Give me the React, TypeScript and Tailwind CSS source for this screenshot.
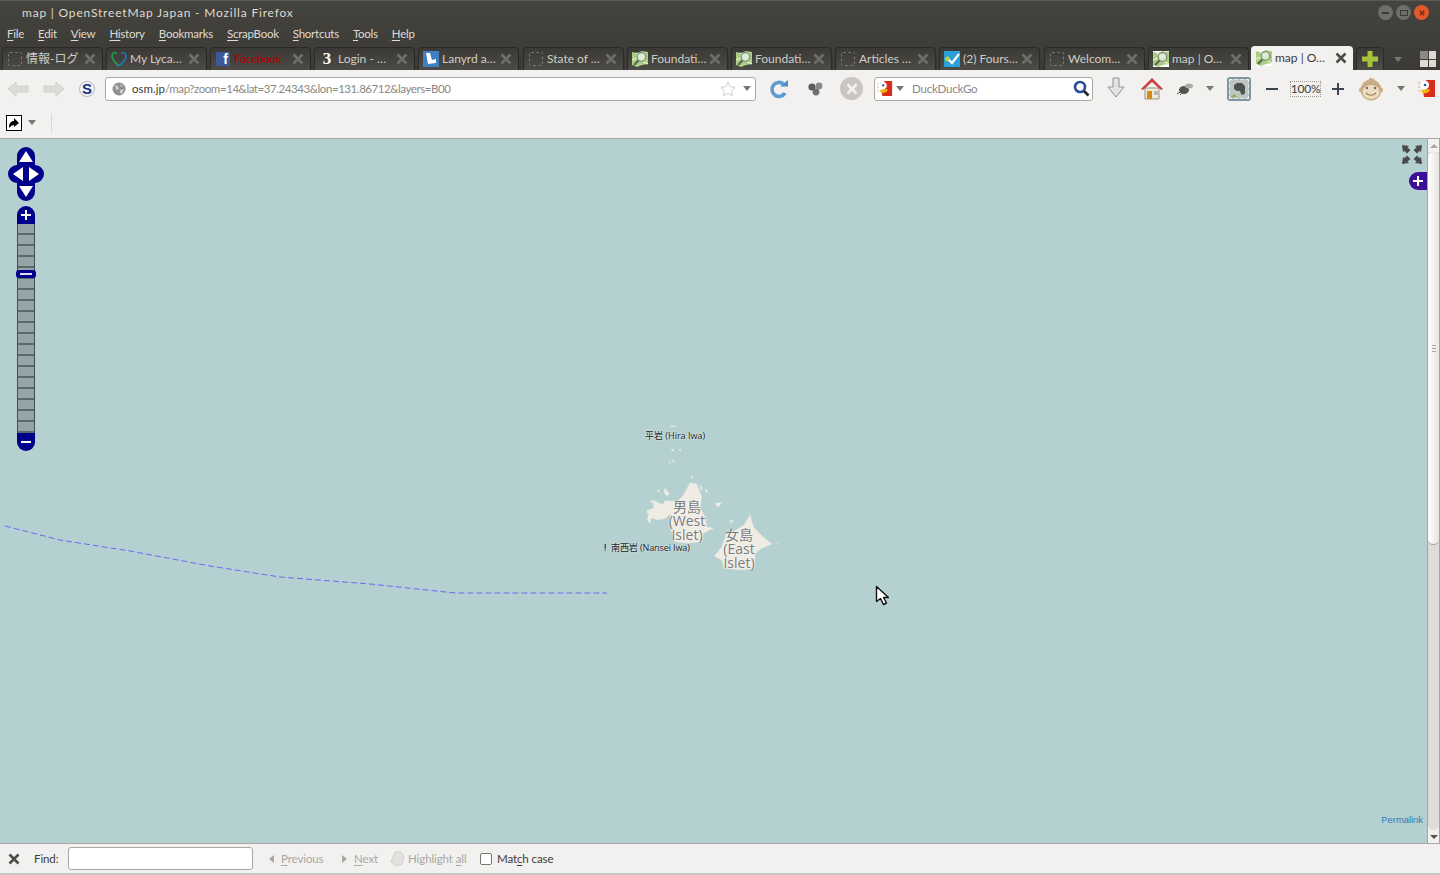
import React from "react"

const ui = "font-['Lato','Noto_Sans_CJK_JP',sans-serif]"
const mapFont = "font-['Open_Sans','Noto_Sans_CJK_JP',sans-serif]"

const Blank = () => (
  <div className="w-[14px] h-[14px] rounded-[2px] border border-dashed border-[#77766f]" />
)

const Lyca = () => (
  <svg width="16" height="16" viewBox="0 0 16 16" fill="none">
    <path d="M8 15C3 11 1 8 1 5c0-3 3-4 5-3" stroke="#1f9a55" strokeWidth="1.8" />
    <path d="M8 15c5-4 7-7 7-10 0-3-3-4-5-3" stroke="#1d76b8" strokeWidth="1.8" />
  </svg>
)

const Fb = () => (
  <div className="w-[14px] h-[14px] bg-[#3b5998] flex items-end justify-end overflow-hidden pr-[2px]">
    <span className="text-white text-[14px] leading-[13px] font-bold font-['Liberation_Sans',sans-serif]">f</span>
  </div>
)

const Three = () => (
  <span className="text-white text-[17px] leading-[16px] font-bold font-['Liberation_Serif',serif]">3</span>
)

const Lanyrd = () => (
  <div className="w-[16px] h-[16px] bg-[#3f7fc4] flex items-center justify-center">
    <svg width="12" height="13" viewBox="0 0 12 13"><path d="M1 1h4l2 7 4-1v4l-8 1z" fill="#fff" /></svg>
  </div>
)

const Osm = ({ boxed }: { boxed?: boolean }) => (
  <svg width="16" height="16" viewBox="0 0 16 16">
    {boxed && <rect width="16" height="16" fill="#fff" />}
    <path d="M0 1l5 1 5-2 6 1v12l-6 1-5 2-5-2z" fill="#a9cf85" />
    <path d="M4 2l6 5M12 1l-3 6M0 9l5-2M11 11l5 2" stroke="#e9eecb" strokeWidth="1.2" />
    <circle cx="9.5" cy="6" r="4.3" fill="#e8efe6" fillOpacity="0.75" stroke="#7f8c78" strokeWidth="1.2" />
    <path d="M6.5 9.5L2 14" stroke="#5a6353" strokeWidth="2" />
  </svg>
)

const Four = () => (
  <div className="w-[16px] h-[16px] bg-[#2c9fd8] flex items-center justify-center">
    <svg width="16" height="16" viewBox="0 0 16 16">
      <circle cx="3.5" cy="8" r="2.5" fill="#b5d33d" />
      <path d="M5 9l3 3 7-9" fill="none" stroke="#fff" strokeWidth="2.2" />
    </svg>
  </div>
)

const X = ({ className }: { className: string }) => (
  <svg className={className} width="12" height="12" viewBox="0 0 12 12">
    <path d="M1.5 1.5l9 9M10.5 1.5l-9 9" stroke="currentColor" strokeWidth="2.6" />
  </svg>
)

const tabs: { title: string; icon: React.ReactNode; red?: boolean }[] = [
  { title: "情報-ログ", icon: <Blank /> },
  { title: "My Lyca…", icon: <Lyca /> },
  { title: "Facebook", icon: <Fb />, red: true },
  { title: "Login - …", icon: <Three /> },
  { title: "Lanyrd a…", icon: <Lanyrd /> },
  { title: "State of …", icon: <Blank /> },
  { title: "Foundati…", icon: <Osm /> },
  { title: "Foundati…", icon: <Osm /> },
  { title: "Articles …", icon: <Blank /> },
  { title: "(2) Fours…", icon: <Four /> },
  { title: "Welcom…", icon: <Blank /> },
  { title: "map | O…", icon: <Osm boxed /> },
]

const menus = [
  ["F", "ile", "ml-[7px]"],
  ["E", "dit", "ml-[14px]"],
  ["V", "iew", "ml-[14px]"],
  ["Hi", "story", "ml-[14px]"],
  ["B", "ookmarks", "ml-[14px]"],
  ["Sc", "rapBook", "ml-[14px]"],
  ["S", "hortcuts", "ml-[14px]"],
  ["T", "ools", "ml-[14px]"],
  ["H", "elp", "ml-[14px]"],
] as const

const Caret = ({ className = "" }: { className?: string }) => (
  <div className={`w-0 h-0 border-x-[4px] border-x-transparent border-t-[5px] border-t-[#77766f] ${className}`} />
)

const WinBtn = ({ bg, children }: { bg: string; children: React.ReactNode }) => (
  <div className={`w-[15px] h-[15px] rounded-full flex items-center justify-center ${bg}`}>{children}</div>
)

function TitleBar() {
  return (
    <div className="h-[24px] flex items-center justify-between pl-[22px] pr-[11px] border-t border-t-[#5a5955]">
      <span className="text-[12px] tracking-[0.81px] text-[#dfdbd2]">map | OpenStreetMap Japan - Mozilla Firefox</span>
      <div className="flex items-center">
        <WinBtn bg="bg-[#6f6e68]"><div className="w-[7px] h-[2px] bg-[#3c3b37]" /></WinBtn>
        <div className="ml-[3px]">
          <WinBtn bg="bg-[#6f6e68]"><div className="w-[8px] h-[6px] border border-[#3c3b37]" /></WinBtn>
        </div>
        <div className="ml-[3px]">
          <WinBtn bg="bg-[#e2582a]"><X className="text-[#6d2a12] scale-50" /></WinBtn>
        </div>
      </div>
    </div>
  )
}

function MenuBar() {
  return (
    <div className="h-[22px] pb-[2px] flex items-center text-[11.5px] tracking-[-0.25px] text-[#dfdbd2]">
      {menus.map(([u, rest, ml], i) => (
        <span key={i} className={ml}>
          <span className="underline underline-offset-2">{u}</span>
          {rest}
        </span>
      ))}
    </div>
  )
}

function TabStrip() {
  return (
    <div className="h-[24px] flex items-end pl-[2px] gap-[3px]">
      {tabs.map((t, i) => (
        <div
          key={i}
          className={`w-[101px] h-[23px] pb-[1px] shrink-0 rounded-t-[4px] border border-b-0 border-[#2b2a27] bg-gradient-to-b from-[#3a3935] to-[#4c4b46] flex items-center pl-[4px] pr-[6px] ${
            i === 5 || i === 10 ? "ml-[1px]" : ""
          }`}
        >
          <div className="w-[16px] h-[16px] flex items-center justify-center shrink-0">{t.icon}</div>
          <span
            className={`ml-[3px] flex-1 text-[12px] whitespace-nowrap overflow-hidden ${
              t.red ? "italic text-[#b00000]" : "text-[#cfccc4]"
            }`}
          >
            {t.title}
          </span>
          <X className="text-[#6f6e69] shrink-0" />
        </div>
      ))}
      <div className="w-[102px] h-[24px] pb-[1px] shrink-0 -ml-[1px] rounded-t-[4px] bg-[#f2f1f0] flex items-center pl-[5px] pr-[6px]">
        <div className="w-[16px] h-[16px] flex items-center justify-center shrink-0"><Osm boxed /></div>
        <span className="ml-[3px] flex-1 text-[12px] whitespace-nowrap overflow-hidden text-[#3c3b37]">map | O…</span>
        <X className="text-[#4c4b47] shrink-0" />
      </div>
      <div className="w-[28px] h-[23px] shrink-0 rounded-t-[4px] border border-b-0 border-[#2b2a27] bg-gradient-to-b from-[#3a3935] to-[#4c4b46] flex items-center justify-center">
        <svg width="16" height="16" viewBox="0 0 16 16"><path d="M5.5 0h5v5.5H16v5h-5.5V16h-5v-5.5H0v-5h5.5z" fill="#a5c63b" /></svg>
      </div>
      <Caret className="ml-[7px] mb-[8px] border-t-[#6f6e69]" />
      <div className="ml-[15px] mb-[3px] grid grid-cols-2 gap-[1px] w-[16px] h-[16px]">
        <div className="bg-[#8a8983]" />
        <div className="bg-[#dfdbd2]" />
        <div className="bg-[#dfdbd2]" />
        <div className="bg-[#dfdbd2]" />
      </div>
    </div>
  )
}

const Arrow = ({ flip }: { flip?: boolean }) => (
  <svg width="24" height="18" viewBox="0 0 24 18" className={flip ? "-scale-x-100" : ""}>
    <path d="M10 2L2 9l8 7v-4h12V6H10z" fill="#dcdbd8" stroke="#d0cfcb" strokeLinejoin="round" />
  </svg>
)

const Duck = ({ w }: { w: number }) => (
  <svg width={w} height="18" viewBox="0 0 18 18">
    <path d="M8 0h9v17H6l-1-6 4-2z" fill="#d92d1c" />
    <circle cx="7" cy="5" r="4" fill="#fff" />
    <circle cx="7" cy="5" r="1.3" fill="#2a4fa8" />
    <path d="M3 10l9-1-1 3-6 2z" fill="#f2b705" />
    <path d="M1 2v12" stroke="#e8a090" strokeDasharray="2 2" />
  </svg>
)

function NavBar() {
  return (
    <div className="h-[37px] flex items-center pl-[6px] text-[#3c3b37]">
      <Arrow />
      <div className="ml-[12px]"><Arrow flip /></div>
      <div className="ml-[13px] w-[16px] h-[16px] rounded-full bg-[#f4f4f6] border border-[#b8b8c0] flex items-center justify-center">
        <span className="text-[#16307e] text-[15px] font-bold leading-none font-['Liberation_Sans',sans-serif]">S</span>
      </div>

      <div className="ml-[10px] w-[651px] h-[24px] bg-white rounded-[3px] border border-[#aaa8a2] flex items-center pl-[6px] pr-[4px]">
        <svg width="14" height="14" viewBox="0 0 14 14">
          <circle cx="7" cy="7" r="6.5" fill="#8f8f8f" />
          <path d="M3 3l3 1 1 3-3 1zM8 2l3 2-2 1zM8 8l4-1-2 5-2-1z" fill="#cfcfcf" />
        </svg>
        <span className="ml-[6px] text-[11.5px] text-[#3c3b37]">osm.jp</span>
        <span className="text-[11.5px] tracking-[-0.43px] text-[#8a8984]">/map?zoom=14&amp;lat=37.24343&amp;lon=131.86712&amp;layers=B00</span>
        <div className="flex-1" />
        <svg width="18" height="18" viewBox="0 0 18 18">
          <path d="M9 2l2.2 4.6 5 .7-3.6 3.5.9 5L9 13.4l-4.5 2.4.9-5L1.8 7.3l5-.7z" fill="#fff" stroke="#d2d1ce" />
        </svg>
        <Caret className="ml-[6px]" />
      </div>

      <svg className="ml-[13px]" width="20" height="20" viewBox="0 0 20 20">
        <path d="M14.5 5A7 7 0 1 0 16 14" fill="none" stroke="#5f9bd3" strokeWidth="3.6" />
        <path d="M11 7.5h8V1z" fill="#4f8ccb" />
      </svg>

      <svg className="ml-[18px]" width="16" height="16" viewBox="0 0 16 16">
        <circle cx="5" cy="6" r="3.6" fill="#5c5c5c" />
        <circle cx="12" cy="5" r="3.4" fill="#8a8a8a" />
        <circle cx="9" cy="11" r="3.4" fill="#6e6e6e" />
      </svg>

      <div className="ml-[17px] w-[23px] h-[23px] rounded-full bg-[#c9c6c4] flex items-center justify-center">
        <X className="text-[#f2f1f0]" />
      </div>

      <div className="ml-[11px] w-[219px] h-[24px] bg-white rounded-[3px] border border-[#aaa8a2] flex items-center pl-[2px] pr-[2px]">
        <Duck w={16} />
        <Caret className="ml-[3px]" />
        <span className="ml-[8px] flex-1 text-[11.5px] tracking-[-0.2px] text-[#8a8984]">DuckDuckGo</span>
        <svg width="17" height="17" viewBox="0 0 17 17">
          <circle cx="7" cy="7" r="5" fill="#fff" stroke="#2c4a9a" strokeWidth="2.6" />
          <path d="M11 11l4.5 4.5" stroke="#20242c" strokeWidth="2.6" />
        </svg>
      </div>

      <svg className="ml-[14px]" width="18" height="23" viewBox="0 0 18 23">
        <path d="M6 1h6v9h5l-8 10-8-10h5z" fill="#e3e4e2" stroke="#8f938f" />
      </svg>

      <svg className="ml-[16px]" width="22" height="23" viewBox="0 0 22 23">
        <path d="M4 11h14v11H4z" fill="#efe9dc" stroke="#9a9488" />
        <path d="M0 12L11 1l11 11-2 1-9-8-9 8z" fill="#c8403a" />
        <rect x="6" y="14" width="5" height="8" fill="#d88a1d" />
        <rect x="13" y="14" width="4" height="4" fill="#b9b7ae" />
      </svg>

      <svg className="ml-[13px]" width="18" height="14" viewBox="0 0 18 14">
        <ellipse cx="8" cy="8" rx="5" ry="4" fill="#55544f" />
        <ellipse cx="13" cy="4" rx="4" ry="2.5" fill="#aaa9a4" />
        <path d="M1 12l5-3M4 13l3-3" stroke="#55544f" />
      </svg>
      <Caret className="ml-[12px]" />

      <div className="ml-[13px] w-[24px] h-[24px] rounded-[3px] bg-[#7d98a3] flex items-center justify-center">
        <div className="w-[20px] h-[20px] bg-[#bfc6c2] border border-dashed border-[#eef0ee] flex items-center justify-center">
          <svg width="16" height="16" viewBox="0 0 16 16">
            <path d="M3 4l3-2h5l3 3v7l-2 2-2-1-1-3H6L3 8z" fill="#4c5350" />
            <path d="M0 16l3-3 3 3z" fill="#85b04a" />
          </svg>
        </div>
      </div>

      <div className="ml-[15px] w-[12px] h-[2px] bg-[#3c4550]" />
      <div className="ml-[12px] w-[31px] h-[16px] border border-dotted border-[#9a9992] flex items-center justify-center text-[12px] text-[#3c3b37] tracking-[-0.2px]">
        100%
      </div>
      <div className="ml-[11px] w-[12px] h-[12px] relative">
        <div className="absolute left-0 top-[5px] w-[12px] h-[2px] bg-[#3c4550]" />
        <div className="absolute top-0 left-[5px] w-[2px] h-[12px] bg-[#3c4550]" />
      </div>

      <svg className="ml-[15px]" width="24" height="24" viewBox="0 0 24 24">
        <circle cx="2.5" cy="13" r="2.5" fill="#c9ad85" />
        <circle cx="21.5" cy="13" r="2.5" fill="#c9ad85" />
        <path d="M9 3l3-3 1 2 3-1-2 3z" fill="#c9ad85" />
        <circle cx="12" cy="13" r="10.5" fill="#c9ad85" />
        <ellipse cx="12" cy="15" rx="8.5" ry="7" fill="#ecdcc0" />
        <circle cx="8" cy="11" r="1.2" fill="#7d6850" />
        <circle cx="16" cy="11" r="1.2" fill="#7d6850" />
        <path d="M7 16c3 3 7 3 10 0" fill="none" stroke="#9a7d5c" strokeWidth="1.2" />
      </svg>
      <Caret className="ml-[14px]" />
      <div className="ml-[13px]"><Duck w={18} /></div>
    </div>
  )
}

function BookmarksBar() {
  return (
    <div className="h-[32px] flex items-center pl-[6px] border-b border-b-[#a8a8a4]">
      <div className="w-[16px] h-[16px] bg-white border border-black flex items-center justify-center">
        <svg width="12" height="12" viewBox="0 0 12 12">
          <path d="M1 11C1 6 3 4 6 4V1l5 5-5 4V8C4 8 3 9 1 11z" fill="#000" />
        </svg>
      </div>
      <Caret className="ml-[6px]" />
      <div className="ml-[15px] w-px h-[18px] bg-[#d8d7d3]" />
    </div>
  )
}

function PanZoom() {
  return (
    <div className="absolute left-[8px] top-[8px] w-[36px] flex flex-col items-center">
      <svg width="36" height="54" viewBox="0 0 36 54">
        <path d="M18 0a9 9 0 0 1 9 9v9a9 9 0 0 1 0 18v9a9 9 0 0 1-18 0v-9a9 9 0 0 1 0-18V9a9 9 0 0 1 9-9z" fill="#00008b" />
        <path d="M18 4l7 11H11zM18 50l-7-11h14zM5 27l10-7v14zM31 27l-10-7v14z" fill="#fff" />
      </svg>
      <div className="mt-[5px] w-[18px] h-[18px] rounded-t-[9px] bg-[#00008b] flex items-center justify-center relative">
        <div className="absolute w-[10px] h-[2.5px] bg-white" />
        <div className="absolute w-[2.5px] h-[10px] bg-white" />
      </div>
      <div className="relative w-[18px] flex flex-col border-x border-[#3f4f4f] bg-[#95a5a5]">
        {Array.from({ length: 19 }).map((_, i) => (
          <div key={i} className="h-[11px] border-b-2 border-b-[#5a6a6a]" />
        ))}
        <div className="absolute left-[-2px] top-[46px] w-[20px] h-[8px] rounded-[3px] bg-[#00008b] flex items-center justify-center">
          <div className="w-[12px] h-[2px] bg-[#dde]" />
        </div>
      </div>
      <div className="w-[18px] h-[18px] rounded-b-[9px] bg-[#00008b] flex items-center justify-center">
        <div className="w-[10px] h-[2.5px] bg-white" />
      </div>
    </div>
  )
}

function Islands() {
  return (
    <div className={`absolute left-[590px] top-[281px] w-[200px] h-[160px] ${mapFont}`}>
      <svg className="absolute inset-0" width="200" height="160" viewBox="0 0 600 480">
        <g fill="#efece4" stroke="#efece4" strokeWidth="1" strokeLinejoin="round">
          <path d="M300 188l20 4 15 38-5 35 15 25 5 30 20 5-30 15-5 25-45 5-35-5-18-55 5-30-15 15-25 5-22-8-10-20 22-8-4-24 30 14 8-12 36 2 18-18z" />
          <path d="M480 285l10 35 26 28 30 24-32 13-19 17-2 43-40 5-50-5-8-25-22-12 22-26 14-40 24-8 30-20z" />
          <path d="M225 205l13 17-8 6-8-13zM175 285l10 5-5 20-8-10zM375 250l20-2-10 14zM345 208l8 2-3 8zM418 303l12-2-4 8zM560 370l4 1-2 3z" />
          <path d="M242 18h14v2h-14zM245 88h6v5h-6zM268 88h4v5h-4zM248 118l5 2-3 8zM238 125l3 1-1 5zM302 168l5 1-1 7zM330 195l8 10-6 5zM182 243h6v4h-6zM203 210h5v5h-5z" />
          <path d="M44 372h3v14h-3zM44 389h3v3h-3z" fill="#222" stroke="none" />
        </g>
      </svg>
      <span className="absolute left-[55px] top-[10px] whitespace-nowrap text-[9px] leading-[12px] text-[#222] [text-shadow:0_0_2px_#fff]">平岩 (Hira Iwa)</span>
      <span className="absolute left-[21px] top-[122px] whitespace-nowrap text-[9px] tracking-[-0.1px] leading-[12px] text-[#222] [text-shadow:0_0_2px_#fff]">南西岩 (Nansei Iwa)</span>
      <div className="absolute left-[67px] top-[80px] w-[60px] text-center text-[14px] leading-[14px] text-[#7a7a7a] [text-shadow:0_0_2px_#fff]">
        男島<br />(West<br />Islet)
      </div>
      <div className="absolute left-[119px] top-[108px] w-[60px] text-center text-[14px] leading-[14px] text-[#7a7a7a] [text-shadow:0_0_2px_#fff]">
        女島<br />(East<br />Islet)
      </div>
    </div>
  )
}

function Scrollbar() {
  return (
    <div className="w-[13px] shrink-0 bg-[#f2f1f0] flex flex-col items-center border-x border-x-[#a5a4a0]">
      <div className="h-[13px] flex items-center"><div className="w-0 h-0 border-x-[4px] border-x-transparent border-b-[4px] border-b-[#a8a7a3]" /></div>
      <div className="flex-1 w-full rounded-b-[6px] bg-[#dedcd8] flex flex-col">
        <div className="h-[393px] rounded-[6px] bg-gradient-to-r from-[#ffffff] to-[#e6e5e2] border-b border-b-[#a5a4a0] flex items-center justify-center">
          <div className="w-[4px] h-[7px] flex flex-col justify-between">
            <div className="h-px bg-[#a5a4a0]" />
            <div className="h-px bg-[#a5a4a0]" />
            <div className="h-px bg-[#a5a4a0]" />
          </div>
        </div>
      </div>
      <div className="h-[13px] flex items-center"><div className="w-0 h-0 border-x-[4px] border-x-transparent border-t-[4px] border-t-[#55544f]" /></div>
    </div>
  )
}

function MapArea() {
  return (
    <div className="flex-1 flex min-h-0">
      <div className="relative flex-1 bg-[#b5d0d0] overflow-hidden">
        <svg className="absolute left-0 top-0" width="620" height="480" viewBox="0 139 620 480">
          <path d="M5 526L60 540L130 551L210 566L280 577L370 584L455 593L530 593L607 593" fill="none" stroke="#6a6af0" strokeWidth="1" strokeDasharray="6 3" />
        </svg>
        <PanZoom />
        <Islands />
        <svg className="absolute left-[1401px] top-[5px]" width="22" height="21" viewBox="0 0 22 21">
          <g fill="#4a4a4a">
            <path d="M1 1l7 1-1.5 1.5L9.5 6 6 9.5 3.5 7 2 8z" />
            <path d="M21 1l-7 1 1.5 1.5L12.500 6 16 9.500 18.500 7 20 8z" />
            <path d="M1 20l7-1-1.5-1.500L9.500 15 6 11.500 3.500 14 2 13z" />
            <path d="M21 20l-7-1 1.500-1.500L12.500 15 16 11.500 18.500 14 20 13z" />
          </g>
        </svg>
        <div className="absolute right-0 top-[33px] w-[18px] h-[18px] rounded-l-[9px] bg-[#3b0f96] flex items-center justify-center">
          <div className="absolute w-[10px] h-[2.5px] bg-white" />
          <div className="absolute w-[2.5px] h-[10px] bg-white" />
        </div>
        <span className="absolute right-[4px] top-[674px] text-[9.4px] leading-[13px] text-[#2e7ab0] font-['Liberation_Sans',sans-serif]">Permalink</span>
        <svg className="absolute left-[875px] top-[446px]" width="14" height="21" viewBox="0 0 14 21">
          <path d="M1.5 1.5v15l4-3 3 6 3-1.5-3-5.5h5z" fill="#fff" stroke="#111" strokeWidth="1.4" strokeLinejoin="round" />
        </svg>
      </div>
      <Scrollbar />
    </div>
  )
}

function FindBar() {
  return (
    <div className="h-[32px] shrink-0 bg-[#f2f1f0] border-t border-t-[#a8a8a4] border-b-2 border-b-[#c8c7c3] flex items-center text-[11.5px] tracking-[-0.1px]">
      <X className="ml-[8px] text-[#4c4b47]" />
      <span className="ml-[14px] w-[24px] text-[#3c3b37]">Find:</span>
      <div className="ml-[10px] w-[185px] h-[23px] bg-white rounded-[3px] border border-[#a8a7a1]" />
      <div className="ml-[16px] w-0 h-0 border-y-[4px] border-y-transparent border-r-[5px] border-r-[#a8a7a3]" />
      <span className="ml-[7px] w-[43px] text-[#a8a7a3]"><span className="underline underline-offset-2">P</span>revious</span>
      <div className="ml-[18px] w-0 h-0 border-y-[4px] border-y-transparent border-l-[5px] border-l-[#a8a7a3]" />
      <span className="ml-[7px] w-[24px] text-[#a8a7a3]"><span className="underline underline-offset-2">N</span>ext</span>
      <svg className="ml-[12px]" width="15" height="16" viewBox="0 0 15 16">
        <path d="M5 1h6l3 5-2 7-7 2-4-4z" fill="#e3e2de" stroke="#d0cfcb" />
      </svg>
      <span className="ml-[3px] w-[60px] text-[#a8a7a3] whitespace-nowrap">Highlight <span className="underline underline-offset-2">a</span>ll</span>
      <div className="ml-[12px] w-[12px] h-[12px] bg-white rounded-[2px] border border-[#77766f]" />
      <span className="ml-[5px] text-[#3c3b37] whitespace-nowrap">Mat<span className="underline underline-offset-2">c</span>h case</span>
    </div>
  )
}

export default function App() {
  return (
    <div className={`w-[1440px] h-[875px] flex flex-col overflow-hidden ${ui}`}>
      <div className="shrink-0 bg-gradient-to-b from-[#45433e] to-[#3b3a36]">
        <TitleBar />
        <MenuBar />
        <TabStrip />
      </div>
      <div className="shrink-0 bg-[#f2f1f0]">
        <NavBar />
        <BookmarksBar />
      </div>
      <MapArea />
      <FindBar />
    </div>
  )
}
